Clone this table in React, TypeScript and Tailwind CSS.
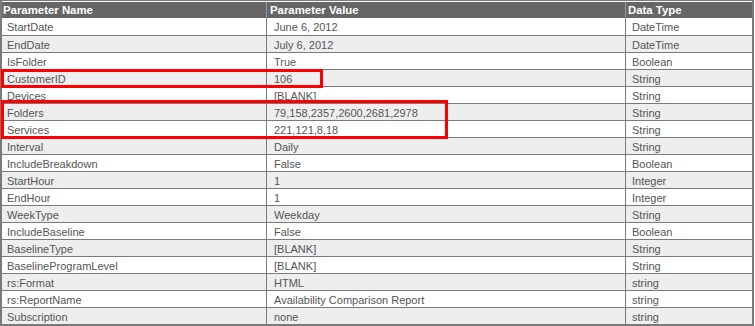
import React from "react";

const rows: [string, string, string][] = [
  ["StartDate", "June 6, 2012", "DateTime"],
  ["EndDate", "July 6, 2012", "DateTime"],
  ["IsFolder", "True", "Boolean"],
  ["CustomerID", "106", "String"],
  ["Devices", "[BLANK]", "String"],
  ["Folders", "79,158,2357,2600,2681,2978", "String"],
  ["Services", "221,121,8,18", "String"],
  ["Interval", "Daily", "String"],
  ["IncludeBreakdown", "False", "Boolean"],
  ["StartHour", "1", "Integer"],
  ["EndHour", "1", "Integer"],
  ["WeekType", "Weekday", "String"],
  ["IncludeBaseline", "False", "Boolean"],
  ["BaselineType", "[BLANK]", "String"],
  ["BaselineProgramLevel", "[BLANK]", "String"],
  ["rs:Format", "HTML", "string"],
  ["rs:ReportName", "Availability Comparison Report", "string"],
  ["Subscription", "none", "string"],
];

export default function App() {
  return (
    <div
      className="relative w-[755px] h-[326px] bg-white"
      style={{ fontFamily: '"Liberation Sans", Arial, sans-serif' }}
    >
      <div className="w-[754px] border-t border-l-2 border-r-2 border-b-2 border-[#7a7a7a]">
        <div className="flex h-[17px] border-t border-white bg-[#666666] text-white font-bold text-[11.4px] leading-[17px]">
          <div className="w-[265px] pl-[1px] border-r border-[#9a9a9a]">Parameter Name</div>
          <div className="w-[359px] pl-[3px] border-r border-[#9a9a9a]">Parameter Value</div>
          <div className="flex-1 pl-[2px]">Data Type</div>
        </div>
        {rows.map((r, i) => (
          <div
            key={i}
            className={`flex text-[11px] text-[#555555] ${
              i === 0 ? "h-[17px] leading-[19px]" : "h-[17px] leading-[18px] border-t border-[#7a7a7a]"
            } ${i % 2 === 1 ? "bg-[#eeeeee]" : "bg-white"}`}
          >
            <div className="w-[265px] pl-[5px] border-r border-[#7a7a7a] overflow-hidden">{r[0]}</div>
            <div className="w-[359px] pl-[7px] border-r border-[#7a7a7a] overflow-hidden">{r[1]}</div>
            <div className="flex-1 pl-[6px] overflow-hidden">{r[2]}</div>
          </div>
        ))}
      </div>
      <div className="absolute left-[1px] top-[69px] w-[322px] h-[19px] border-[3px] border-[#ff0000]" />
      <div className="absolute left-[1px] top-[100px] w-[447px] h-[39px] border-[3px] border-[#ff0000]" />
    </div>
  );
}
